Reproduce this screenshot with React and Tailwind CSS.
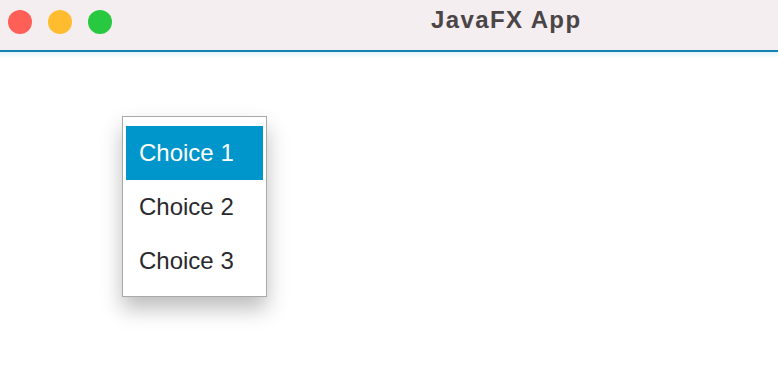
export default function App() {
  const choices = ["Choice 1", "Choice 2", "Choice 3"];

  return (
    <div className="w-[778px] h-[392px] overflow-hidden bg-white font-['Liberation_Sans',Arial,sans-serif]">
      {/* Title bar */}
      <div className="relative h-[50px] bg-[#f4eef0] flex items-start pt-[10px]">
        <div className="flex items-center gap-4 pl-2">
          <span className="w-6 h-6 rounded-full bg-[#fe5f57]" />
          <span className="w-6 h-6 rounded-full bg-[#febc2e]" />
          <span className="w-6 h-6 rounded-full bg-[#28c840]" />
        </div>
        <div className="absolute left-[431px] top-[8px] text-[24px] leading-none tracking-[1.4px] font-bold text-[#4b4547]">
          JavaFX App
        </div>
      </div>
      <div className="h-[2px] bg-[#1382b3]" />
      <div className="h-[6px] bg-gradient-to-b from-[#e2f3f8] to-white" />

      {/* Content */}
      <div className="pt-[58px] pl-[122px]">
        <div className="w-[145px] border border-[#a9a9a9] bg-white p-[3px] pt-[9px] pb-[8px] shadow-[0_12px_20px_rgba(0,0,0,0.26)]">
          {choices.map((c, i) => (
            <div
              key={c}
              className={`h-[54px] flex items-center pl-[13px] text-[24px] ${
                i === 0 ? "bg-[#0096cb] text-white" : "text-[#2a2a2e]"
              }`}
            >
              {c}
            </div>
          ))}
        </div>
      </div>
    </div>
  );
}
